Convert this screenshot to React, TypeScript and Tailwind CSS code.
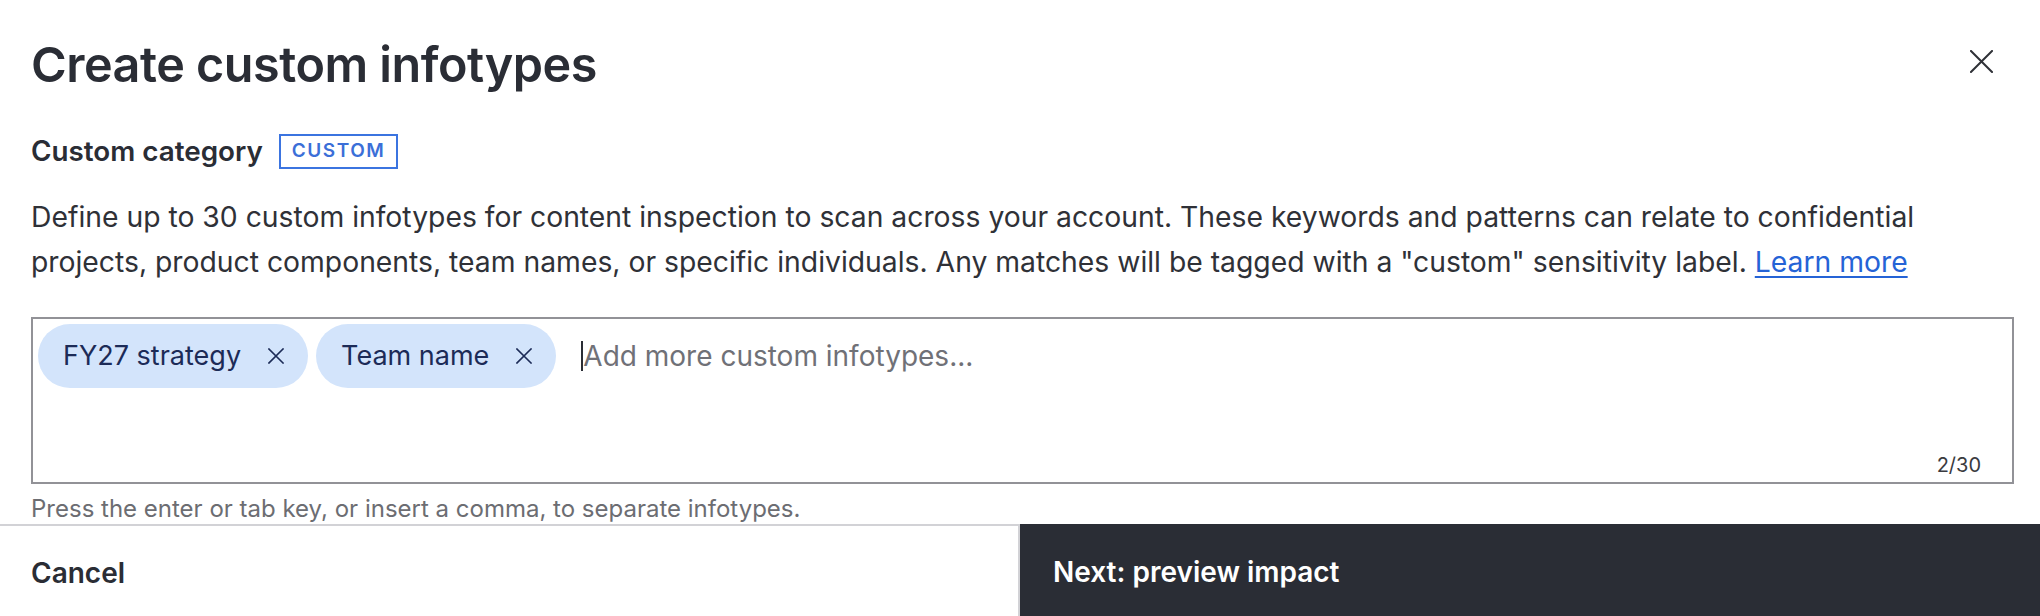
function CloseIcon({ size, stroke, color }: { size: number; stroke: number; color: string }) {
  return (
    <svg width={size} height={size} viewBox={`0 0 ${size} ${size}`} fill="none">
      <path d={`M1 1L${size - 1} ${size - 1}M${size - 1} 1L1 ${size - 1}`} stroke={color} strokeWidth={stroke} strokeLinecap="square" />
    </svg>
  )
}

function Chip({ label }: { label: string }) {
  return (
    <div className="h-[64px] rounded-full bg-[#d3e4fb] pl-[25px] pr-[24px] flex items-center gap-[27px] text-[27px] text-[#1c2b57]">
      <span>{label}</span>
      <CloseIcon size={16} stroke={1.6} color="#1c2b57" />
    </div>
  )
}

export default function App() {
  return (
    <div className="h-[616px] flex flex-col bg-white text-[#2a2d35] font-['Inter',sans-serif]">
      <div className="flex-1 pl-[31px] pr-[26px] pt-[37px]">
        <div className="flex justify-between items-start">
          <h1 className="text-[48.5px] leading-[56px] font-semibold tracking-[-0.01em]">Create custom infotypes</h1>
          <button className="mt-[13px] mr-[21px]">
            <CloseIcon size={23} stroke={2} color="#2f3137" />
          </button>
        </div>

        <div className="mt-[41px] h-[35px] flex items-center gap-[16px]">
          <span className="text-[27.8px] font-semibold">Custom category</span>
          <span className="h-[35px] px-[11px] flex items-center border-2 border-[#3b74e0] text-[#3b6fd8] text-[19px] font-semibold tracking-[0.08em]">
            CUSTOM
          </span>
        </div>

        <p className="mt-[26px] max-w-[1940px] text-[28.3px] leading-[45px] text-[#2f3137]">
          Define up to 30 custom infotypes for content inspection to scan across your account. These keywords and patterns can relate to confidential projects, product components, team names, or specific individuals. Any matches will be tagged with a "custom" sensitivity label.{' '}
          <a className="text-[#2563d6] underline underline-offset-[4px] decoration-[1.5px]">Learn more</a>
        </p>

        <div className="mt-[32px] h-[167px] border-2 border-[#929297] p-[5px] flex flex-col">
          <div className="flex items-center gap-[8px]">
            <Chip label="FY27 strategy" />
            <Chip label="Team name" />
            <div className="ml-[17px] flex items-center">
              <span className="w-[2px] h-[30px] bg-[#2a2d35]" />
              <span className="text-[28px] text-[#707177]">Add more custom infotypes...</span>
            </div>
          </div>
          <div className="mt-auto self-end pr-[26px] text-[20px] leading-[24px] text-[#3a3b40]">2/30</div>
        </div>

        <p className="mt-[10px] text-[24px] leading-[30px] text-[#6c6d72]">
          Press the enter or tab key, or insert a comma, to separate infotypes.
        </p>
      </div>

      <div className="h-[92px] flex">
        <button className="w-1/2 border-t-2 border-r-2 border-[#d2d2d6] pl-[31px] pt-[4px] text-left text-[28px] font-semibold">
          Cancel
        </button>
        <button className="w-1/2 bg-[#2a2d35] pl-[33px] pt-[4px] text-left text-[28px] font-semibold text-white">
          Next: preview impact
        </button>
      </div>
    </div>
  )
}
